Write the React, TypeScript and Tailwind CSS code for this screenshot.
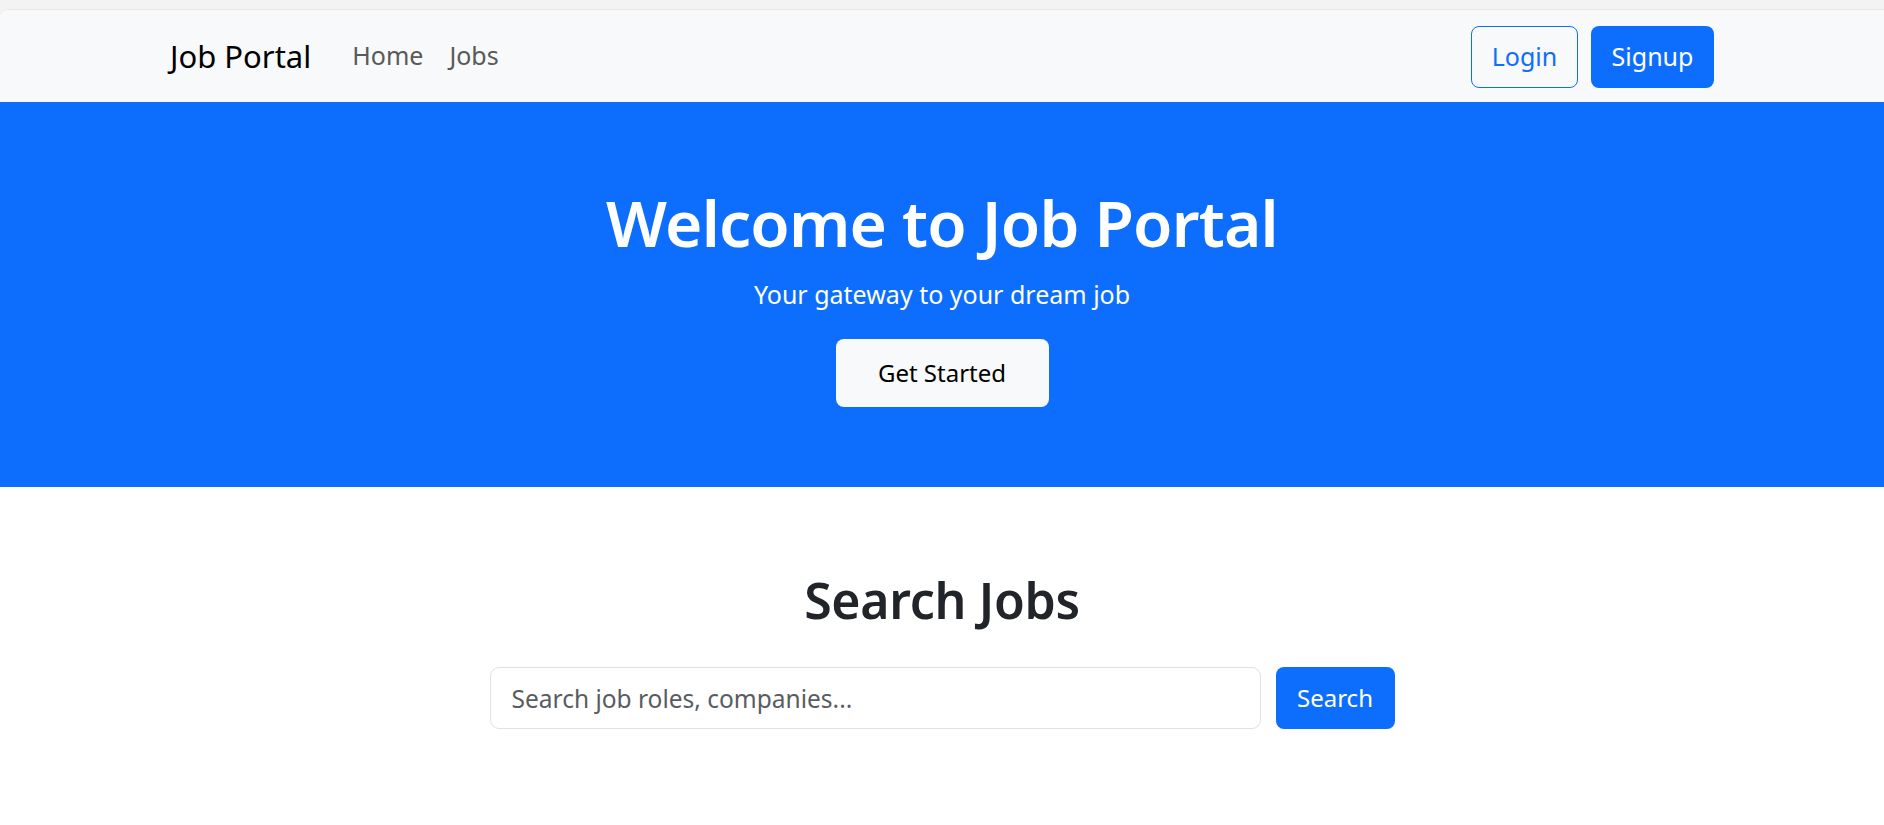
import { useState } from 'react';

export default function App() {
  const [query, setQuery] = useState('');

  return (
    <div className="min-h-screen bg-[#f3f3f3] pt-[9px] font-['Noto_Sans',sans-serif]">
      <div className="min-h-[816px] bg-white rounded-tl-[9px] border-t border-[#e5e5e5] overflow-hidden">
        {/* Navbar */}
        <nav className="h-[92px] bg-[#f8f9fa]">
          <div className="mx-auto w-[1544px] h-full flex items-center justify-between">
            <div className="flex items-center">
              <a href="#" className="text-[31px] leading-none text-black">Job Portal</a>
              <div className="flex items-center ml-[41px] gap-[26px] text-[25px] text-[#595959]">
                <a href="#">Home</a>
                <a href="#">Jobs</a>
              </div>
            </div>
            <div className="flex items-center gap-[13px] mt-[2px]">
              <button className="w-[107px] h-[62px] rounded-[8px] border border-[#0d6efd] text-[#0d6efd] text-[25px]">
                Login
              </button>
              <button className="w-[123px] h-[62px] rounded-[8px] bg-[#0d6efd] text-white text-[25px]">
                Signup
              </button>
            </div>
          </div>
        </nav>

        {/* Hero */}
        <section className="h-[385px] bg-[#0d6efd] flex flex-col items-center pt-[79px] text-white">
          <h1 className="text-[64px] leading-[84px] font-semibold tracking-[-0.8px]">Welcome to Job Portal</h1>
          <p className="mt-[11px] text-[25px] leading-[36px]">Your gateway to your dream job</p>
          <button className="mt-[27px] w-[213px] h-[68px] rounded-[8px] bg-[#f8f9fa] text-black text-[24px]">
            Get Started
          </button>
        </section>

        {/* Search */}
        <section className="flex flex-col items-center pt-[85px] pb-[80px]">
          <h2 className="text-[50px] leading-[56px] font-semibold text-[#212529] tracking-[-0.3px]">Search Jobs</h2>
          <form
            className="mt-[39px] flex items-center gap-[15px]"
            onSubmit={(e) => e.preventDefault()}
          >
            <input
              value={query}
              onChange={(e) => setQuery(e.target.value)}
              placeholder="Search job roles, companies..."
              className="w-[771px] h-[62px] rounded-[9px] border border-[#dee2e6] px-[21px] text-[24.5px] text-[#212529] placeholder:text-[#595c5f] outline-none"
            />
            <button className="w-[119px] h-[62px] rounded-[8px] bg-[#0d6efd] text-white text-[24px]">
              Search
            </button>
          </form>
        </section>
      </div>
    </div>
  );
}
